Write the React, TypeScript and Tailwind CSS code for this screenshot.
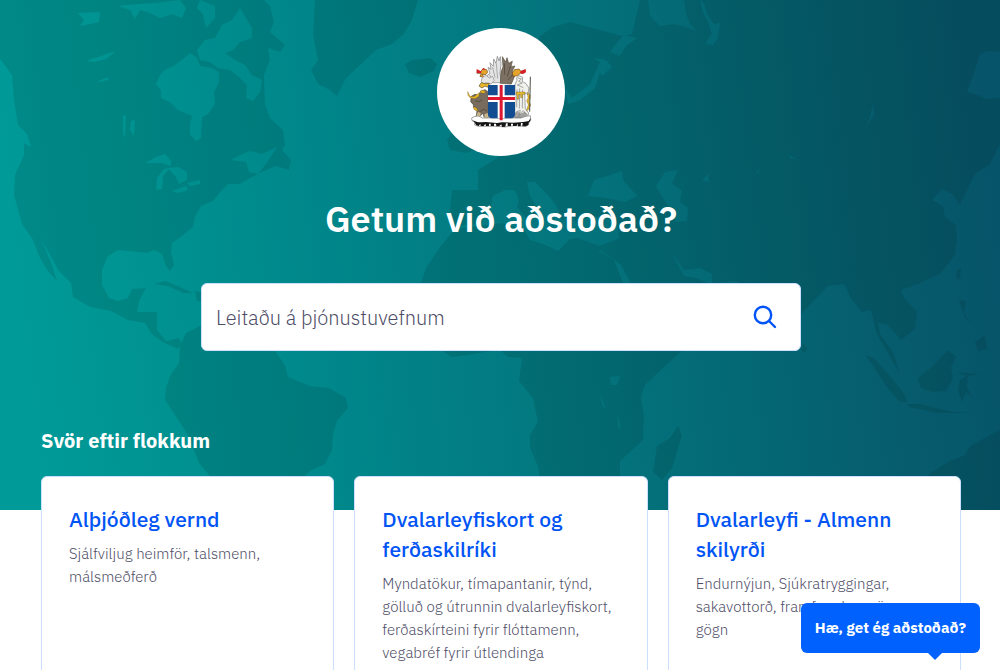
import { useState } from "react";

const categories = [
  {
    title: "Alþjóðleg vernd",
    description: "Sjálfviljug heimför, talsmenn, málsmeðferð",
  },
  {
    title: "Dvalarleyfiskort og ferðaskilríki",
    description:
      "Myndatökur, tímapantanir, týnd, gölluð og útrunnin dvalarleyfiskort, ferðaskírteini fyrir flóttamenn, vegabréf fyrir útlendinga",
  },
  {
    title: "Dvalarleyfi - Almenn skilyrði",
    description:
      "Endurnýjun, Sjúkratryggingar, sakavottorð, framfærsla og önnur gögn",
  },
];

const WorldMap = () => (
  <svg
    viewBox="0 0 1000 510"
    preserveAspectRatio="xMidYMid slice"
    className="absolute inset-0 h-full w-full"
    aria-hidden="true"
  >
    <defs>
      <linearGradient id="sea" x1="0" y1="0.53" x2="1" y2="0.47">
        <stop offset="0" stopColor="#009b99" />
        <stop offset="0.12" stopColor="#009492" />
        <stop offset="0.33" stopColor="#00868a" />
        <stop offset="0.5" stopColor="#037a81" />
        <stop offset="0.7" stopColor="#046a76" />
        <stop offset="0.88" stopColor="#065c6d" />
        <stop offset="1" stopColor="#065469" />
      </linearGradient>
      {/* seas and lakes are cut out of the land */}
      <mask id="water">
        <rect width="1000" height="510" fill="#fff" />
        {/* Hudson Bay and the northern straits */}
        <path d="M190 53 197 58 200 66 212 68 219 72 219 82 214 92 215 104 208 114 202 117 201 138 196 141 190 134 190 125 192 116 178 110 170 102 161 98 161 90 156 84 160 75 165 70 175 65 183 59Z" />
        <path d="M200 60 197 50 205 40 215 38 222 25 232 20 240 8 246 18 252 28 252 38 240 42 233 50 225 53 235 60 245 65 252 75 262 80 260 92 253 101 246 98 247 85 240 78 230 70 218 68 210 62Z" />
        <path d="M118 6 138 4 155 3 180 0 186 8 182 18 172 14 160 18 150 13 140 10 135 19 130 10Z" />
        <path d="M200 0 215 6 215 18 206 28 203 14 197 8Z" />
        <path d="M78 13 100 12 99 22 90 24 80 26 84 20Z" />
        <path d="M86 61 98 57 116 51 106 59 94 62Z" />
        <path d="M98 81 109 77 108 80 99 82Z" />
        {/* Great Lakes */}
        <path d="M145 163 156 157 165 154 171 161 171 166 162 163 154 163Z" />
        <path d="M156 190 157 178 164 169 170 168 163 176 162 189Z" />
        <path d="M168 168 178 167 187 172 187 180 179 184 176 177Z" />
        <path d="M172 191 186 186 188 190 178 193Z" />
        <path d="M187 183 200 180 200 184 190 186Z" />
        <path d="M123 116 126 115 125 138 123 134ZM131 121 135 120 134 136 130 130Z" />
        {/* Gulf of St Lawrence */}
        <path d="M231 160 240 155 250 151 262 154 277 147 270 158 266 164 258 174 249 172 246 162Z" />
        {/* Mediterranean, Black Sea, Caspian, Red Sea, Gulf */}
        <path d="M455 229 478 226 491 207 493 196 505 190 515 190 519 200 517 207 528 221 541 214 530 196 527 182 535 182 548 195 556 205 562 220 572 216 577 224 590 215 617 221 619 238 600 246 577 238 570 239 558 251 543 244 530 240 524 230 502 223Z" />
        <path d="M588 196 594 180 607 176 622 171 623 180 637 196 625 202 606 198Z" />
        <path d="M656 186 665 172 678 170 672 183 682 191 680 202 688 208 687 221 676 222 668 206Z" />
        <path d="M614 260 621 265 637 295 655 330 646 322 628 295Z" />
        <path d="M671 252 684 270 700 268 712 274 712 285 696 278 684 276Z" />
        {/* Baltic and White Sea */}
        <path d="M565 88 572 98 590 84 600 62 594 58 606 60 612 67 602 76 600 72 595 88 580 100 568 104Z" />
        <path d="M610 52 619 40 624 35 637 38 626 46 620 56Z" />
        <path d="M648 0 684 0 686 14 690 24 697 31 686 27 674 24 660 26 650 16Z" />
        <path d="M700 0 704 4 708 16 714 24 720 23 718 38 713 45 705 44 712 34 708 22 703 12Z" />
        {/* lakes of Asia and Africa */}
        <path d="M873 104 874 115 865 129 869 120ZM788 154 798 160 790 158ZM756 173 760 168 758 173Z" />
        <path d="M702 180 708 174 709 182Z" />
        <path d="M610 377 620 376 617 385 611 385ZM600 393 606 410 602 404ZM618 415 621 430 618 426Z" />
        <path d="M980 54 988 51 1000 52 1000 98 985 99 978 95 967 92 973 76Z" />
      </mask>
    </defs>
    <rect width="1000" height="510" fill="url(#sea)" />
    <g fill="#001c18" opacity="0.12" mask="url(#water)">
      {/* North and Central America */}
      <path d="M0 0H264L270 6 274 22 270 32 285 45 280 52 268 48 270 60 264 75 265 104 270 118 283 130 285 145 282 150 291 160 289 170 276 166 262 172 250 178 240 184 228 184 222 190 213 201 201 206 195 217 193 227 182 236 172 243 171 252 174 265 170 271 166 266 162 254 154 250 147 253 130 251 118 250 108 256 102 270 102 285 109 298 118 301 128 298 132 289 146 288 139 301 137 312 157 312 157 330 166 341 179 338 181 343 178 349 163 342 152 334 145 323 128 320 111 311 90 307 73 297 71 283 58 270 49 253 42 241 52 265 57 281 47 270 40 258 33 240 22 224 14 195 15 175 24 155 24 143 31 147 27 134 18 125 14 100 12 75 0 59Z" />
      {/* Cuba and Hispaniola */}
      <path d="M154 284 165 281 180 287 193 293 183 293 168 286ZM195 291 208 293 220 297 212 303 197 301Z" />
      {/* Greenland */}
      <path d="M315 0 313 35 318 60 311 70 318 84 330 90 337 96 346 78 357 68 376 50 392 44 404 34 412 20 418 0Z" />
      <path d="M405 64 412 60 430 58 437 64 434 71 420 77 409 73Z" />
      {/* South America */}
      <path d="M180 345 186 333 200 326 225 322 262 335 275 351 285 365 288 377 310 386 329 388 346 398 348 408 337 421 333 435 332 450 325 464 310 471 298 482 288 515H210L209 475 199 463 188 435 175 415 165 400 166 388 170 376 179 363Z" />
      {/* British Isles */}
      <path d="M450 150 447 140 453 132 460 128 470 135 474 150 466 153Z" />
      {/* Europe and Asia */}
      <path d="M478 190 452 190 450 210 455 226 480 224 491 207 493 196 500 226 540 260 600 250 614 260 630 295 645 322 654 340 675 335 720 310 718 290 712 284 735 281 755 290 772 320 785 345 795 325 804 311 828 286 844 284 852 300 862 312 871 310 877 334 893 362 900 374 893 352 880 334 878 323 888 325 901 340 915 329 917 312 904 298 901 290 920 283 940 274 955 255 957 240 956 225 945 217 943 206 932 200 942 189 952 194 960 205 975 174 990 164 1000 144V0H640L632 34 622 36 600 30 570 22 553 27 540 36 525 65 512 92 520 120 510 150 478 170Z" />
      {/* Africa */}
      <path d="M455 229 500 223 530 240 558 251 577 238 614 260 632 300 654 342 683 350 665 366 645 385 641 398 644 415 643 440 629 453 620 461 620 515H545L538 466 530 448 530 435 538 422 533 398 519 381 522 358 508 357 500 350 485 352 468 355 452 357 440 350 422 325 414 305 420 285 426 268 440 247Z" />
      <path d="M678 426 682 435 672 468 662 480 653 472 657 446 670 438ZM803 343 807 348 805 353 801 350Z" />
      {/* South East Asia */}
      <path d="M865 355 874 358 890 376 905 395 907 402 900 402 886 386 874 367ZM906 404 920 404 936 408 954 412 972 413 937 413 909 407ZM918 378 932 367 948 350 956 357 951 367 953 378 946 391 932 392 921 388ZM960 380 968 375 967 387 973 398 966 392 962 402 958 390ZM957 270 961 268 960 280 956 278ZM959 300 966 301 964 314 972 323 965 318ZM975 342 985 335 987 349 978 351ZM955 372 981 374 968 376Z" />
      {/* Australia */}
      <path d="M928 475 948 462 965 455 970 446 985 438 1000 430V515H930Z" />
    </g>
  </svg>
);

const CoatOfArms = () => (
  <svg
    viewBox="3 9 240 270"
    className="h-[90px] w-20"
    role="img"
    aria-label="Skjaldarmerki Íslands"
    strokeLinejoin="round"
  >
    {/* griffin and eagle wings */}
    <path
      d="M84 116 76 106 82 94 90 88 84 70 93 76 90 56 100 67 101 45 108 58 112 37 117 51 121 38 123 60 120 88 124 116Z"
      fill="#e4e4e4"
      stroke="#7d7d7d"
      strokeWidth="2"
    />
    <path
      d="M98 70 105 101M109 59 113 104M88 92 100 110"
      fill="none"
      stroke="#8a8a8a"
      strokeWidth="2"
    />
    <path
      d="M121 118 123 84 129 68 127 38 137 54 141 41 146 58 157 52 153 68 165 66 156 82 166 90 160 106 154 120Z"
      fill="#7d7163"
      stroke="#57503f"
      strokeWidth="2"
    />
    <path
      d="M133 58 134 92M151 66 142 98M160 90 144 108"
      fill="none"
      stroke="#453f36"
      strokeWidth="2"
    />
    {/* heads */}
    <path
      d="M52 79 62 83 69 74 80 77 83 85 77 92 66 91 73 101 60 97 64 88 51 88Z"
      fill="#e5a52d"
      stroke="#6f4410"
      strokeWidth="2"
    />
    <path d="M50 75 59 80 65 82 63 87 50 87ZM65 76 72 72 75 79Z" fill="#d71d29" />
    <path
      d="M160 97 157 87 163 77 177 75 183 82 195 78 193 87 181 88 173 95Z"
      fill="#e5a52d"
      stroke="#6f4410"
      strokeWidth="2"
    />
    <path d="M181 82 197 75 198 85 188 90 180 87Z" fill="#d71d29" />
    <path
      d="M66 101 78 94 88 102 97 97 103 109 93 120 77 116 70 121 64 113Z"
      fill="#e6e6e4"
      stroke="#888"
      strokeWidth="2"
    />
    <path
      d="M64 116 75 119 88 118 85 130 75 126 66 132 57 126Z"
      fill="#eab82e"
      stroke="#5b4510"
      strokeWidth="2"
    />
    {/* bull */}
    <path
      d="M34 157 45 151 56 154 62 142 75 137 85 144V219H72L69 207 60 217 49 216 51 201 42 193 40 182 32 173Z"
      fill="#776c5e"
      stroke="#4b443a"
      strokeWidth="2"
    />
    <path
      d="M23 143 30 157 42 158 52 151 58 146 57 157 45 164 31 162 24 154ZM39 188 49 191 55 202 43 197ZM64 138 77 141 73 148 60 146Z"
      fill="#e8b727"
      stroke="#665018"
      strokeWidth="1"
    />
    <path
      d="M46 170 58 173 66 167M58 204 72 195 81 202"
      fill="none"
      stroke="#453e35"
      strokeWidth="2"
    />
    <path d="M54 203 62 207 60 220 48 219ZM74 210 86 207 86 222 73 222Z" fill="#c9b58a" />
    {/* giant with staff */}
    <path
      d="M165 120 171 109 170 101 177 95 188 100 187 112 198 119 207 132 204 151 194 147 196 194 206 207 202 221 164 222Z"
      fill="#f0f0ec"
      stroke="#777"
      strokeWidth="2"
    />
    <path
      d="M174 102 184 105 176 112 187 117 172 123 190 131M171 136 170 190M179 133 178 194M188 137 187 193M170 203 181 199 177 211 190 200 199 210M174 219 184 208"
      fill="none"
      stroke="#808080"
      strokeWidth="2"
    />
    <path
      d="M168 144H195V151H187V161H182V152H176V166H171V151H168ZM202 145 211 154 210 163 206 171 212 183 206 196 199 200 205 182 200 170 204 162Z"
      fill="#e7bb2e"
      stroke="#594615"
      strokeWidth="1"
    />
    <path d="M211 98 209 203" stroke="#4b4b43" strokeWidth="3" />
    <path d="M165 206 173 201 180 211 193 203 203 211 197 222H165Z" fill="#777" opacity="0.65" />
    {/* basalt slab */}
    <path
      d="M42 218 35 222 36 230 44 234V243L55 247 112 247 134 249 164 245 198 247 206 242 207 233 212 228 211 215 198 217 182 222H68L55 216Z"
      fill="#fff"
      stroke="#777"
      strokeWidth="2"
    />
    <path
      d="M36 228 43 231 54 235H65L77 234 111 237 126 235 160 236 190 234 206 231 212 222 211 231 206 236 205 243 197 247H187L188 237 183 237 182 247H174L173 239 169 246H159V239H153V246H143V238H138L136 248 126 249 124 241 117 247H109L108 239H102V246H92V239H87V246H78L76 239 71 246H62L61 239 56 246 49 244 43 234Z"
      fill="#151515"
    />
    {/* shield */}
    <path d="M84 123H165V211Q165 223 153 223H96Q84 223 84 211Z" fill="#124d91" />
    <path d="M113 123H134V223H113ZM84 154H165V174H84Z" fill="#fff" />
    <path d="M119 123H128V229H119ZM84 159H165V168H84Z" fill="#df1630" />
  </svg>
);

const App = () => {
  const [query, setQuery] = useState("");

  return (
    <div className="min-h-screen overflow-hidden bg-white font-['IBM_Plex_Sans',Roboto,sans-serif]">
      <header className="relative pt-7 pr-[39px] pb-[55px] pl-[41px] text-white">
        <WorldMap />
        <div className="relative flex flex-col items-center">
          <a
            href="#"
            className="flex size-32 items-center justify-center rounded-full bg-white"
          >
            <CoatOfArms />
          </a>
          <h1 className="mt-10 text-4xl leading-[46px] font-semibold">
            Getum við aðstoðað?
          </h1>
          <form
            role="search"
            onSubmit={(e) => e.preventDefault()}
            className="mt-[41px] flex h-[68px] w-full max-w-[600px] items-center rounded-md border border-[#ccdfff] bg-white pr-[19px]"
          >
            <input
              type="search"
              aria-label="Leitaðu á þjónustuvefnum"
              placeholder="Leitaðu á þjónustuvefnum"
              value={query}
              onChange={(e) => setQuery(e.target.value)}
              className="h-full min-w-0 flex-1 rounded-md px-3.5 text-xl font-light text-[#00003c] outline-none placeholder:text-[#4d4d66]"
            />
            <button type="submit" aria-label="Leita" className="p-1 text-[#0054f5]">
              <svg
                viewBox="0 0 24 24"
                className="size-6"
                fill="none"
                stroke="currentColor"
                strokeWidth="2.4"
                strokeLinecap="round"
              >
                <circle cx="10" cy="10" r="8.2" />
                <path d="m16 16 6 6" />
              </svg>
            </button>
          </form>
        </div>
        <h2 className="relative mt-[76px] text-xl leading-7 font-bold">
          Svör eftir flokkum
        </h2>
      </header>

      <main className="relative -mt-[34px] grid grid-cols-3 gap-5 pr-[39px] pb-10 pl-[41px]">
        {categories.map((category) => (
          <a
            key={category.title}
            href="#"
            className="min-h-60 rounded-md border border-[#ccdfff] bg-white px-[27px] pt-[27px] pb-7"
          >
            <h3 className="text-[21px] leading-[30px] font-medium text-[#0054f5]">
              {category.title}
            </h3>
            <p className="mt-2 text-[15px] leading-[23px] font-light text-[#4d4d66]">
              {category.description}
            </p>
          </a>
        ))}
      </main>

      <button
        type="button"
        className="fixed right-5 bottom-[17px] h-[50px] rounded-md bg-[#0061ff] px-3.5 text-[15px] font-bold text-white"
      >
        Hæ, get ég aðstoðað?
        <span className="absolute top-full right-[38px] border-x-[7px] border-t-[7px] border-x-transparent border-t-[#0061ff]" />
      </button>
    </div>
  );
};

export default App;
